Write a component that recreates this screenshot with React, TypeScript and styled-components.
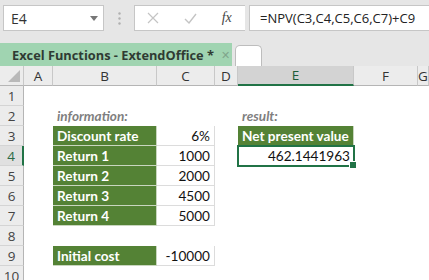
import * as React from 'react';
import styled, {createGlobalStyle, css} from 'styled-components';

const GlobalStyle = createGlobalStyle`
  html, body {
    margin: 0;
    padding: 0;
    background: #ffffff;
    overflow: hidden;
  }
`;

const SHEET_FONT = `Lato, "Open Sans", "Liberation Sans", sans-serif`;
const UI_FONT = `"Open Sans", "Noto Sans", "Liberation Sans", sans-serif`;
const GREEN = '#548235';
const EXCEL = '#217346';

const Page = styled.div`
  width: 429px;
  height: 280px;
  overflow: hidden;
  background: #ffffff;
`;

/* ---------- formula bar ---------- */

const FormulaBar = styled.div`
  display: flex;
  align-items: flex-start;
  height: 43px;
  padding: 5px 0 0 3px;
  box-sizing: border-box;
  background: #e6e6e6;
`;

const NameBox = styled.div`
  display: flex;
  align-items: center;
  justify-content: space-between;
  width: 101px;
  height: 26px;
  box-sizing: border-box;
  padding: 0 5px 0 7px;
  background: #ffffff;
  border: 1px solid #c6c6c6;
  font-family: ${UI_FONT};
  font-size: 14px;
  color: #333;
`;

const Grip = styled.div`
  display: flex;
  align-items: center;
  justify-content: center;
  width: 30px;
  height: 26px;
`;

const ButtonsBox = styled.div`
  display: flex;
  align-items: center;
  width: 111px;
  height: 26px;
  box-sizing: border-box;
  background: #ffffff;
  border: 1px solid #c6c6c6;
  border-right: none;
`;

const BarButton = styled.div`
  display: flex;
  align-items: center;
  justify-content: center;
  width: 37px;
  height: 100%;
`;

const Fx = styled.span`
  font-family: "Liberation Serif", "DejaVu Serif", serif;
  font-style: italic;
  font-size: 14px;
  color: #444;
`;

const FormulaInput = styled.div`
  display: flex;
  align-items: center;
  flex: 1;
  height: 26px;
  box-sizing: border-box;
  margin-left: 4px;
  padding-left: 10px;
  background: #ffffff;
  border: 1px solid #c6c6c6;
  border-right: none;
  font-family: ${UI_FONT};
  font-size: 13px;
  color: #222;
  white-space: nowrap;
`;

/* ---------- tabs ---------- */

const TabStrip = styled.div`
  display: flex;
  align-items: flex-end;
  height: 23px;
  background: #e6e6e6;
`;

const ActiveTab = styled.div`
  display: flex;
  align-items: center;
  gap: 7px;
  width: 232px;
  height: 23px;
  box-sizing: border-box;
  padding-left: 5px;
  background: #a0d4b1;
  font-family: ${UI_FONT};
  font-weight: 700;
  font-size: 12.8px;
  color: #2f3b33;
  white-space: nowrap;
  overflow: hidden;
`;

const TabClose = styled.span`
  margin-left: auto;
  margin-right: 8px;
  font-weight: 400;
  font-size: 11px;
  color: #7fa58b;
`;

const NewTab = styled.div`
  width: 27px;
  height: 21px;
  margin-left: 3px;
  box-sizing: border-box;
  background: #ffffff;
  border: 1px solid #bdbdbd;
  border-bottom: none;
  border-radius: 5px 5px 0 0;
`;

/* ---------- sheet ---------- */

const Sheet = styled.div`
  display: grid;
  grid-template-columns: 24px 29px 104px 58px 23px 116px 64px 1fr;
  grid-auto-rows: 20px;
  font-family: ${SHEET_FONT};
  font-size: 13.6px;
  color: #111;
`;

const Corner = styled.div`
  position: relative;
  background: #ececec;
  border-right: 1px solid #c8c8c8;
  border-bottom: 1px solid #b5b5b5;
  box-sizing: border-box;
`;

const ColHead = styled.div<{$selected?: boolean}>`
  display: flex;
  align-items: center;
  justify-content: center;
  box-sizing: border-box;
  background: #ececec;
  border-right: 1px solid #c8c8c8;
  border-bottom: 1px solid #b5b5b5;
  font-family: ${UI_FONT};
  font-size: 13.5px;
  color: #333;
  ${({$selected}) =>
    $selected &&
    css`
      background: #d3d3d3;
      color: #1f5c38;
      border-bottom: 2px solid ${EXCEL};
    `}
`;

const RowHead = styled.div<{$selected?: boolean}>`
  display: flex;
  align-items: center;
  justify-content: center;
  box-sizing: border-box;
  background: #ececec;
  border-right: 1px solid #b5b5b5;
  border-bottom: 1px solid #d4d4d4;
  font-family: ${UI_FONT};
  font-size: 13.5px;
  color: #444;
  ${({$selected}) =>
    $selected &&
    css`
      background: #e0e0e0;
      color: #2a6a45;
      border-right: 2px solid ${EXCEL};
    `}
`;

type Kind = 'empty' | 'label' | 'value' | 'note';

const Cell = styled.div<{$kind: Kind}>`
  display: flex;
  align-items: center;
  box-sizing: border-box;
  padding: 0 4px;
  white-space: nowrap;
  overflow: visible;
  background: #ffffff;
  ${({$kind}) =>
    $kind === 'label' &&
    css`
      background: ${GREEN};
      color: #ffffff;
      font-weight: 700;
      border-right: 1px solid #c9d6bf;
      border-bottom: 1px solid #c9d6bf;
    `}
  ${({$kind}) =>
    $kind === 'value' &&
    css`
      justify-content: flex-end;
      border-bottom: 1px solid #dcdcdc;
      border-right: 1px solid #dcdcdc;
    `}
  ${({$kind}) =>
    $kind === 'note' &&
    css`
      color: #7f7f7f;
      font-style: italic;
      font-weight: 700;
    `}
`;

const ActiveCell = styled.div`
  position: relative;
  display: flex;
  align-items: center;
  justify-content: flex-end;
  box-sizing: border-box;
  margin: -1px;
  padding: 0 3px;
  border: 2px solid ${EXCEL};
  background: #ffffff;
`;

const FillHandle = styled.span`
  position: absolute;
  right: -4px;
  bottom: -4px;
  width: 6px;
  height: 6px;
  background: ${EXCEL};
  border: 1px solid #ffffff;
`;

type CellDef = {text?: string; kind?: Kind; active?: boolean};

const columns = ['A', 'B', 'C', 'D', 'E', 'F', 'G'];

const rows: Record<number, Record<string, CellDef>> = {
  2: {B: {text: 'information:', kind: 'note'}, E: {text: 'result:', kind: 'note'}},
  3: {
    B: {text: 'Discount rate', kind: 'label'},
    C: {text: '6%', kind: 'value'},
    E: {text: 'Net present value', kind: 'label'},
  },
  4: {
    B: {text: 'Return 1', kind: 'label'},
    C: {text: '1000', kind: 'value'},
    E: {text: '462.1441963', active: true},
  },
  5: {B: {text: 'Return 2', kind: 'label'}, C: {text: '2000', kind: 'value'}},
  6: {B: {text: 'Return 3', kind: 'label'}, C: {text: '4500', kind: 'value'}},
  7: {B: {text: 'Return 4', kind: 'label'}, C: {text: '5000', kind: 'value'}},
  9: {B: {text: 'Initial cost', kind: 'label'}, C: {text: '-10000', kind: 'value'}},
};

const ExcelIcon = () => (
  <svg width="16" height="15" viewBox="0 0 16 15">
    <rect x="6" y="1" width="9" height="13" fill="#ffffff" stroke="#5a8a68" strokeWidth="1" />
    <path d="M9 4h4M9 7h4M9 10h4" stroke="#5a8a68" strokeWidth="1" />
    <rect x="0.5" y="2.5" width="8" height="10" fill="#1e7145" />
    <path d="M2.5 5l4 5M6.5 5l-4 5" stroke="#ffffff" strokeWidth="1.3" />
  </svg>
);

export default function App() {
  return (
    <Page>
      <GlobalStyle />
      <FormulaBar>
        <NameBox>
          E4
          <svg width="8" height="5" viewBox="0 0 8 5">
            <path d="M0 0h8L4 5z" fill="#777" />
          </svg>
        </NameBox>
        <Grip>
          <svg width="3" height="13" viewBox="0 0 3 13">
            <circle cx="1.5" cy="1.5" r="1.2" fill="#b0b0b0" />
            <circle cx="1.5" cy="6.5" r="1.2" fill="#b0b0b0" />
            <circle cx="1.5" cy="11.5" r="1.2" fill="#b0b0b0" />
          </svg>
        </Grip>
        <ButtonsBox>
          <BarButton>
            <svg width="12" height="12" viewBox="0 0 12 12">
              <path d="M1 1l10 10M11 1L1 11" stroke="#c4c4c4" strokeWidth="1.2" />
            </svg>
          </BarButton>
          <BarButton>
            <svg width="13" height="11" viewBox="0 0 13 11">
              <path d="M1 6l4 4L12 1" stroke="#c4c4c4" strokeWidth="1.4" fill="none" />
            </svg>
          </BarButton>
          <BarButton>
            <Fx>fx</Fx>
          </BarButton>
        </ButtonsBox>
        <FormulaInput>=NPV(C3,C4,C5,C6,C7)+C9</FormulaInput>
      </FormulaBar>

      <TabStrip>
        <ActiveTab>
          <ExcelIcon />
          Excel Functions - ExtendOffice *
          <TabClose>✕</TabClose>
        </ActiveTab>
        <NewTab />
      </TabStrip>

      <Sheet>
        <Corner>
          <svg width="12" height="12" viewBox="0 0 12 12" style={{position: 'absolute', right: 3, bottom: 3}}>
            <path d="M12 0v12H0z" fill="#b9b9b9" />
          </svg>
        </Corner>
        {columns.map((c) => (
          <ColHead key={c} $selected={c === 'E'}>
            {c}
          </ColHead>
        ))}
        {Array.from({length: 10}, (_, i) => i + 1).map((r) => (
          <React.Fragment key={r}>
            <RowHead $selected={r === 4}>{r}</RowHead>
            {columns.map((c) => {
              const def = rows[r]?.[c];
              if (def?.active) {
                return (
                  <ActiveCell key={c}>
                    {def.text}
                    <FillHandle />
                  </ActiveCell>
                );
              }
              return (
                <Cell key={c} $kind={def?.kind ?? 'empty'}>
                  {def?.text}
                </Cell>
              );
            })}
          </React.Fragment>
        ))}
      </Sheet>
    </Page>
  );
}
